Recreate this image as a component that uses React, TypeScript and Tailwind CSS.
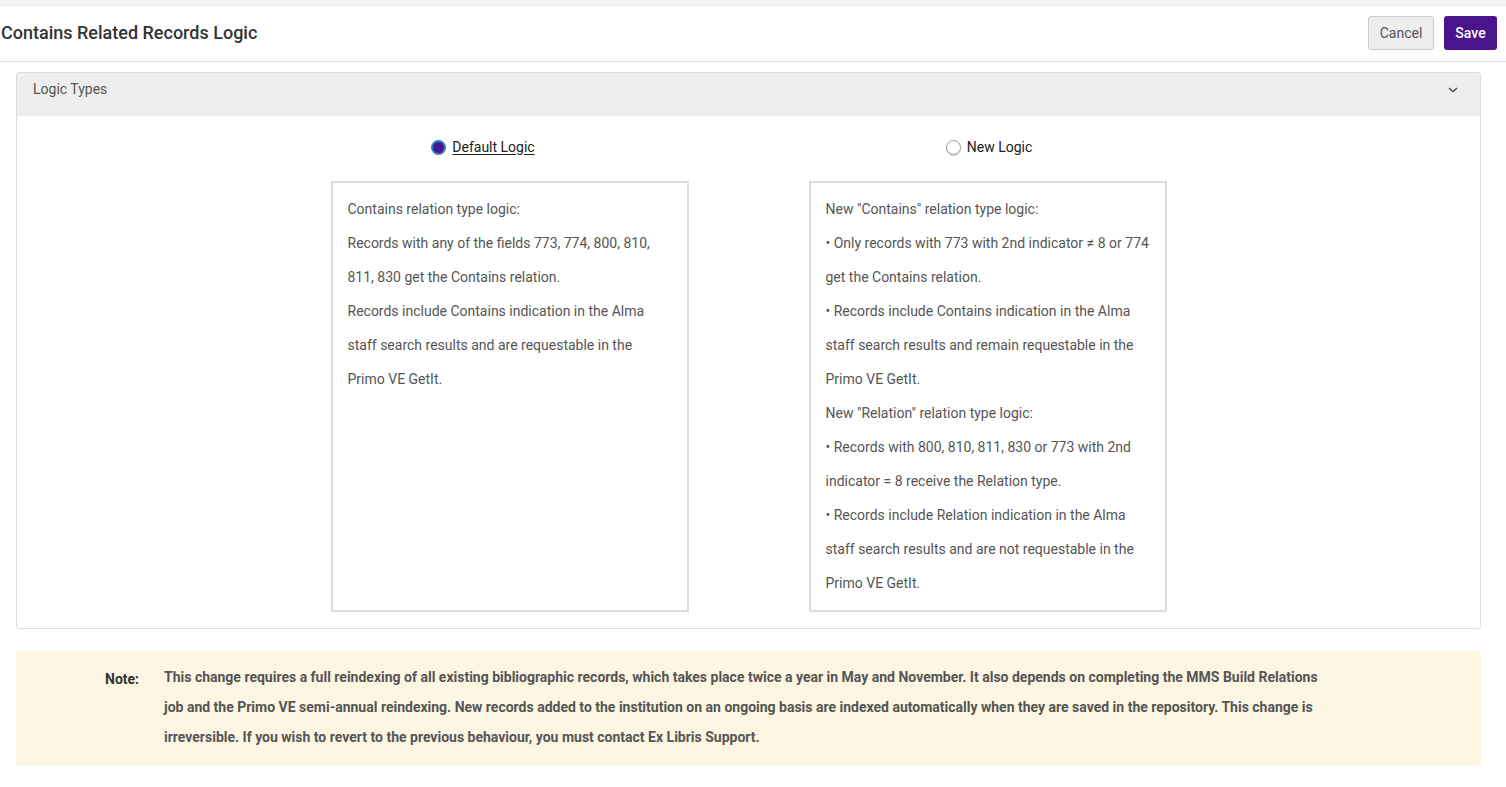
import { useState } from "react";

const defaultLines = [
  ["Contains relation type logic:"],
  ["Records with any of the fields 773, 774, 800, 810,", "811, 830 get the Contains relation."],
  ["Records include Contains indication in the Alma", "staff search results and are requestable in the", "Primo VE GetIt."],
];

const newLines = [
  ['New "Contains" relation type logic:'],
  ["• Only records with 773 with 2nd indicator ≠ 8 or 774", "get the Contains relation."],
  ["• Records include Contains indication in the Alma", "staff search results and remain requestable in the", "Primo VE GetIt."],
  ['New "Relation" relation type logic:'],
  ["• Records with 800, 810, 811, 830 or 773 with 2nd", "indicator = 8 receive the Relation type."],
  ["• Records include Relation indication in the Alma", "staff search results and are not requestable in the", "Primo VE GetIt."],
];

function LogicBox({ paragraphs }: { paragraphs: string[][] }) {
  return (
    <div className="w-[358px] h-[431px] border-2 border-[#dddddd] bg-white px-[15px] pt-[9px] text-[14px] leading-[34px] text-[#555555]">
      {paragraphs.map((p, i) => (
        <p key={i} className="whitespace-nowrap">
          {p.map((line, j) => (
            <span key={j}>
              {line}
              {j < p.length - 1 && <br />}
            </span>
          ))}
        </p>
      ))}
    </div>
  );
}

function Radio({ checked, label, onClick }: { checked: boolean; label: string; onClick: () => void }) {
  return (
    <label className="flex items-center gap-[6px] cursor-pointer" onClick={onClick}>
      {checked ? (
        <span className="w-[15px] h-[15px] rounded-full bg-[#4a148c] border-2 border-[#2a7fc4]" />
      ) : (
        <span className="w-[15px] h-[15px] rounded-full border border-[#9a9a9a] bg-white shadow-[0_1px_1px_rgba(0,0,0,0.15)]" />
      )}
      <span className={checked ? "text-[14px] text-[#222222] underline underline-offset-2" : "text-[14px] text-[#222222]"}>
        {label}
      </span>
    </label>
  );
}

export default function App() {
  const [logic, setLogic] = useState<"default" | "new">("default");

  return (
    <div className="min-h-screen bg-white font-['Roboto',sans-serif]">
      <div className="h-[7px] bg-[#f4f4f4]" />
      {/* Header */}
      <div className="h-[55px] flex items-center justify-between pl-[1px] pr-[9px] border-b border-[#e2e2e2]">
        <h1 className="text-[18px] font-medium text-[#333333] -mt-[4px]">Contains Related Records Logic</h1>
        <div className="flex gap-[10px] -mt-[2px]">
          <button className="h-[34px] w-[66px] rounded-[3px] border border-[#cccccc] bg-[#eeeeee] text-[14px] text-[#555555]">
            Cancel
          </button>
          <button className="h-[34px] w-[53px] rounded-[3px] bg-[#4a148c] text-[14px] font-medium text-white">
            Save
          </button>
        </div>
      </div>

      {/* Logic types panel */}
      <div className="mt-[10px] ml-4 mr-[25px] border border-[#dddddd] rounded-[3px]">
        <div className="h-[43px] bg-[#eeeeee] flex items-center justify-between pl-4 pr-[22px]">
          <span className="text-[14px] text-[#555555] -mt-[10px]">Logic Types</span>
          <svg width="10" height="6" viewBox="0 0 10 6" className="-mt-[10px]">
            <path d="M1 1l4 3.5L9 1" fill="none" stroke="#555555" strokeWidth="1.6" />
          </svg>
        </div>
        <div className="flex justify-center pt-[21px] pb-[16px]">
          <div className="w-[478px] flex flex-col items-center">
            <div className="h-[20px] mb-[24px] pr-[53px] flex items-center">
              <Radio checked={logic === "default"} label="Default Logic" onClick={() => setLogic("default")} />
            </div>
            <LogicBox paragraphs={defaultLines} />
          </div>
          <div className="w-[478px] flex flex-col items-center">
            <div className="h-[20px] mb-[24px] pl-[3px] flex items-center">
              <Radio checked={logic === "new"} label="New Logic" onClick={() => setLogic("new")} />
            </div>
            <LogicBox paragraphs={newLines} />
          </div>
        </div>
      </div>

      {/* Note */}
      <div className="mt-[22px] ml-4 mr-[25px] rounded-[3px] bg-[#fcf6e2] flex pt-[11px] pb-[14px] text-[14px] font-bold leading-[30px]">
        <div className="w-[148px] shrink-0 pl-[89px] text-[#333333] pt-[2px]">Note:</div>
        <p className="text-[#555555] whitespace-nowrap">
          This change requires a full reindexing of all existing bibliographic records, which takes place twice a year in May and November. It also depends on completing the MMS Build Relations
          <br />
          job and the Primo VE semi-annual reindexing. New records added to the institution on an ongoing basis are indexed automatically when they are saved in the repository. This change is
          <br />
          irreversible. If you wish to revert to the previous behaviour, you must contact Ex Libris Support.
        </p>
      </div>
    </div>
  );
}
